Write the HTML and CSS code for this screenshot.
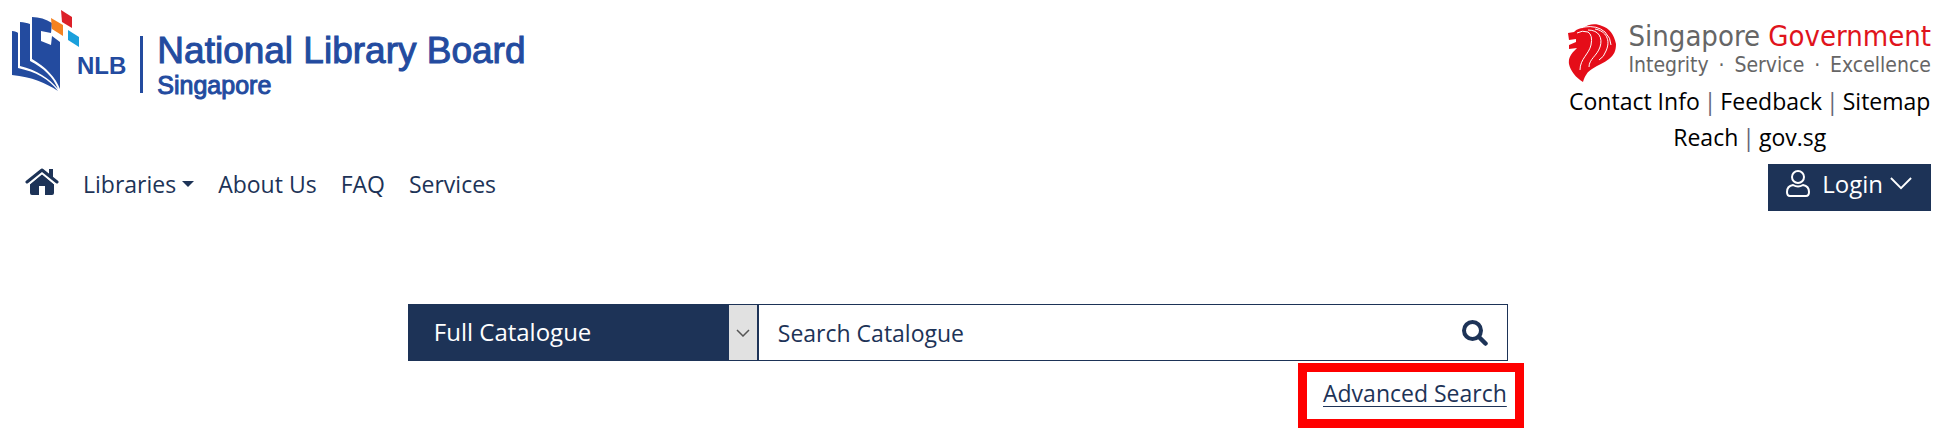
FILE: index.html
```html
<!DOCTYPE html>
<html lang="en">
<head>
<meta charset="utf-8">
<meta name="viewport" content="width=device-width, initial-scale=1">
<title>National Library Board Singapore</title>
<link rel="stylesheet" href="styles.css">
</head>
<body>
<header class="header">
  <div class="left">
    <a class="brand" href="#">
      <svg class="brand-book" viewBox="0 0 70 84" aria-hidden="true">
        <g fill="#234b9f">
          <path d="M20 8C27 8 34 10 40 14L39 24L29 22V32L39 36L40 27L48 33V80C44 69 34 58 20 50Z"/>
          <path d="M8 13C12 13 15 14 18 15V52C32 59 41 68 46 80C37 69 25 61 8 57Z"/>
          <path d="M0 22C3 22 5 23 6 24V59C24 63 37 70 46 82C34 74 20 68 0 66Z"/>
        </g>
        <path d="M39 9L51 16V27L40 20Z" fill="#f58220"/>
        <path d="M49 1L60 8V19L50 13Z" fill="#dc2028"/>
        <path d="M56 21L67 28V38L56 31Z" fill="#1ba0dc"/>
      </svg>
      <span class="brand-short">NLB</span>
      <span class="brand-full"><span class="brand-name">National Library Board</span><span class="brand-place">Singapore</span></span>
    </a>
    <nav class="nav">
      <a href="#" aria-label="Home">
        <svg class="home" viewBox="0 0 34 27" aria-hidden="true" fill="#1d3357">
          <path d="M17 6L29 16V25Q29 27 27 27H20V18H14V27H7Q5 27 5 25V16Z"/>
          <path d="M2 15L17 2.500L32 15" fill="none" stroke="#fff" stroke-width="6"/>
          <path d="M2 14L17 2L32 14" fill="none" stroke="#1d3357" stroke-width="3" stroke-linecap="round" stroke-linejoin="round"/>
          <path d="M24 1H28V11L24 8Z"/>
        </svg>
      </a>
      <a class="dropdown" href="#">Libraries</a>
      <a href="#">About Us</a>
      <a href="#">FAQ</a>
      <a href="#">Services</a>
    </nav>
  </div>
  <div class="right">
    <a class="gov" href="#">
      <svg class="lion" viewBox="0 0 48 58" aria-hidden="true">
        <path fill="#e50d19" d="M0 9L6 8C9 5 12 4 15 4C20 0 28-1 34 2C41 4 46 10 48 20C48 27 46 31 41 35C36 39 30 41 24 45C19 48 17 52 15 58C8 54 2 46 1 40C0 33 4 29 9 24L1 25V21L8 18V15L1 16Z"/>
        <g fill="none" stroke="#fff" stroke-width="1">
          <path d="M9 9Q14 6 20 8Q25 11 23 21C21 30 12 35 12 46"/>
          <path d="M20 6C31 6 35 14 32 23C29 32 21 35 21 43"/>
          <path d="M27 5C38 7 43 16 38 27Q36 33 31 36"/>
          <path d="M16 3Q29 1 37 8Q43 14 43 21"/>
        </g>
      </svg>
      <span class="gov-text"><span class="gov-name">Singapore <b>Government</b></span><span class="gov-motto"><span>Integrity</span><span>·</span><span>Service</span><span>·</span><span>Excellence</span></span></span>
    </a>
    <div class="links">
      <div><a href="#">Contact Info</a><i>|</i><a href="#">Feedback</a><i>|</i><a href="#">Sitemap</a></div>
      <div><a href="#">Reach</a><i>|</i><a href="#">gov.sg</a></div>
    </div>
    <button class="login" type="button">
      <svg class="user" viewBox="0 0 24 28" aria-hidden="true" fill="none" stroke="#fff" stroke-width="2"><circle cx="12" cy="7" r="6"/><path d="M7 15Q12 18 17 15Q23 16 23 22Q23 26 20 26H4Q1 26 1 22Q1 16 7 15Z"/></svg>
      <span>Login</span>
      <svg class="chevron" viewBox="0 0 24 14" aria-hidden="true" fill="none" stroke="#fff" stroke-width="2"><path d="M1 1L12 12L23 1"/></svg>
    </button>
  </div>
</header>
<main class="search">
  <form class="bar">
    <div class="scope">
      <select aria-label="Search scope"><option>Full Catalogue</option></select>
      <span class="scope-arrow"><svg viewBox="0 0 14 8" aria-hidden="true" fill="none" stroke="#555" stroke-width="1.500"><path d="M1 1L7 7L13 1"/></svg></span>
    </div>
    <input class="query" type="text" placeholder="Search Catalogue" aria-label="Search Catalogue">
    <button class="go" type="button" aria-label="Search"><svg viewBox="0 0 26 26" aria-hidden="true" fill="none" stroke="#1d3357"><circle cx="10.500" cy="10.500" r="8.500" stroke-width="4"/><path d="M17 17L23.500 23.500" stroke-width="4.500" stroke-linecap="round"/></svg></button>
  </form>
  <div class="callout"><a href="#">Advanced Search</a></div>
</main>
</body>
</html>
```
FILE: styles.css
```css
* { box-sizing: border-box; }
body {
  margin: 0;
  background: #fff;
  color: #1d3357;
  font: 23px/36px "Open Sans", "Noto Sans", sans-serif;
}
a { color: inherit; text-decoration: none; }
svg { display: block; flex: none; }
.header { display: flex; justify-content: space-between; padding: 8px 11px 0 12px; }
.brand { display: flex; height: 90px; color: #234b9f; font-family: "Liberation Sans", Arial, sans-serif; }
.brand-book { width: 70px; height: 84px; margin-top: 1px; }
.brand-short { margin: 44px 14px 0 -5px; font-size: 24px; line-height: 28px; font-weight: bold; }
.brand-full { display: flex; flex-direction: column; border-left: 3px solid #234b9f; margin: 28px 0 5px; padding-left: 14px; -webkit-text-stroke: 1px #234b9f; }
.brand-name { font-size: 37px; line-height: 34px; margin-top: -2px; white-space: nowrap; }
.brand-place { font-size: 25px; line-height: 28px; margin-top: 3px; }
.nav { display: flex; align-items: center; gap: 24px; margin: 68px 0 0 13px; white-space: nowrap; }
.home { width: 34px; height: 27px; margin-top: -5px; }
.dropdown { display: flex; align-items: center; gap: 6px; }
.dropdown::after { content: ""; border: 6px solid transparent; border-top-color: #1d3357; border-bottom: 0; }
.right { display: flex; flex-direction: column; align-items: flex-end; padding-top: 12px; }
.gov { display: flex; gap: 12px; color: #666; font-family: "DejaVu Sans Condensed", "DejaVu Sans", sans-serif; }
.lion { width: 48px; height: 58px; margin-top: 4px; }
.gov-text { display: flex; flex-direction: column; white-space: nowrap; }
.gov-name { font-size: 29px; line-height: 33px; }
.gov-name b { color: #e0141c; font-weight: normal; }
.gov-motto { display: flex; justify-content: space-between; font-size: 21px; line-height: 25px; }
.links { align-self: stretch; color: #000; text-align: center; margin-top: 1px; white-space: nowrap; }
.links i { font-style: normal; color: #667; padding: 0 4px; }
.login { display: flex; align-items: center; height: 47px; margin-top: 9px; padding: 0 19px 8px 18px; border: 0; background: #1d3357; color: #fff; font: inherit; font-size: 24px; }
.login span { margin: 0 7px 0 12px; }
.user { width: 24px; height: 28px; }
.chevron { width: 22px; height: 13px; }
.search { width: 57%; max-width: 1100px; margin: 93px 0 0 21%; }
.bar { display: flex; height: 57px; border: 1px solid #1d3357; }
.scope { display: flex; width: 350px; padding-right: 2px; background: #1d3357; }
.scope select { appearance: none; flex: 1; min-width: 0; border: 0; padding: 0 0 2px 25px; background: #1d3357; color: #fff; font: inherit; font-size: 24px; }
.scope-arrow { display: grid; place-items: center; width: 28px; background: #e1e1e1; }
.scope-arrow svg { width: 14px; height: 8px; }
.query { flex: 1; min-width: 0; border: 0; padding: 0 19px; color: inherit; font: inherit; }
.query::placeholder { color: #1d3357; opacity: 1; }
.go { border: 0; padding: 0 19px; background: none; }
.go svg { width: 26px; height: 26px; }
.callout { width: max-content; margin: 2px -16px 0 auto; padding: 3px 8px 8px 16px; border: 9px solid #f00; }
.callout a { text-decoration: underline; text-decoration-thickness: 1px; text-underline-offset: 4px; }
```
